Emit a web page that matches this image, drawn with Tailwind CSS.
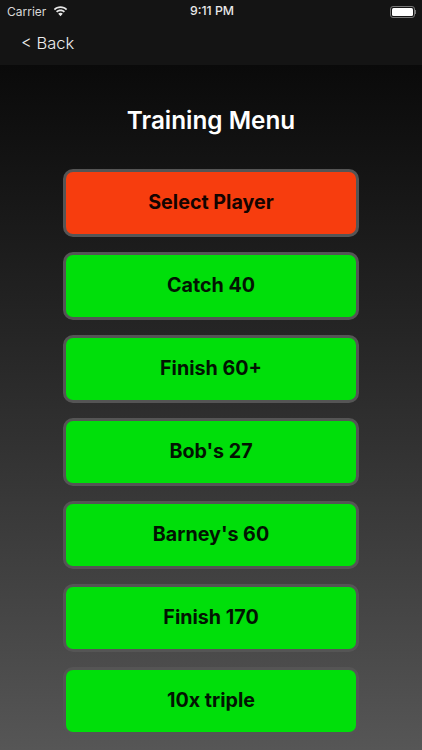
<!DOCTYPE html>
<html lang="en">

<head>
    <meta charset="UTF-8">
    <meta name="viewport" content="width=device-width, initial-scale=1.0">
    <title>Training Menu</title>
    <script src="https://cdn.jsdelivr.net/npm/@tailwindcss/browser@4"></script>
</head>

<body class="bg-black font-['Inter','Liberation_Sans',sans-serif] overflow-hidden">
    <div class="w-[422px] h-[750px] flex flex-col overflow-hidden">
        <!-- status bar + nav bar -->
        <div class="h-[65px] bg-[#141414] shrink-0">
            <div class="h-[22px] pl-[7px] pr-[6px] pt-[1px] flex items-center justify-between relative text-white">
                <div class="flex items-center gap-[7px] text-[12px] text-[#d8d8d8]">
                    <span>Carrier</span>
                    <svg class="w-[15px] h-[11px]" viewBox="0 0 16 12" fill="#e8e8e8">
                        <path d="M8 2.2c2.3 0 4.4.9 6 2.400l1.300-1.400C13.400 1.300 10.800.2 8 .2S2.600 1.300.7 3.200L2 4.600c1.600-1.500 3.700-2.400 6-2.400z" />
                        <path d="M8 5.700c1.400 0 2.600.5 3.600 1.400l1.300-1.400C11.600 4.500 9.900 3.800 8 3.800s-3.600.7-4.900 1.900l1.300 1.400c1-.9 2.200-1.400 3.600-1.400z" />
                        <path d="M8 7.400c-1 0-1.800.4-2.500 1L8 11.300l2.500-2.900c-.7-.6-1.500-1-2.500-1z" />
                    </svg>
                </div>
                <span class="absolute left-[190px] top-[3px] text-[12.300px] leading-[16px] font-medium text-[#e8e8e8]">9:11 PM</span>
                <div class="flex items-center">
                    <div class="w-[25px] h-[12px] rounded-[3px] border border-[#777] p-[1px]">
                        <div class="w-full h-full rounded-[1.500px] bg-white"></div>
                    </div>
                    <div class="w-[1px] h-[4px] bg-[#777]"></div>
                </div>
            </div>
            <div class="pl-[21px] pt-[9px] text-[16.500px] leading-[24px] font-light text-[#eeeeee]">&lt; Back</div>
        </div>

        <!-- menu -->
        <div class="flex-1 bg-gradient-to-b from-[#0a0a0a] to-[#565656] flex flex-col items-center pt-[39px]">
            <h1 class="text-[24.300px] leading-[32px] font-semibold text-white mb-[33px]">Training Menu</h1>
            <div class="flex flex-col gap-[15px]">
                <button class="w-[296px] h-[68px] rounded-[10px] border-[3px] border-[#555555] bg-[#f73d0e] text-[19.700px] font-bold text-[#140400]">Select Player</button>
                <button class="w-[296px] h-[68px] rounded-[10px] border-[3px] border-[#555555] bg-[#00df0a] text-[19.700px] font-bold text-[#021402]">Catch 40</button>
                <button class="w-[296px] h-[68px] rounded-[10px] border-[3px] border-[#555555] bg-[#00df0a] text-[19.700px] font-bold text-[#021402]">Finish 60+</button>
                <button class="w-[296px] h-[68px] rounded-[10px] border-[3px] border-[#555555] bg-[#00df0a] text-[19.700px] font-bold text-[#021402]">Bob's 27</button>
                <button class="w-[296px] h-[68px] rounded-[10px] border-[3px] border-[#555555] bg-[#00df0a] text-[19.700px] font-bold text-[#021402]">Barney's 60</button>
                <button class="w-[296px] h-[68px] rounded-[10px] border-[3px] border-[#555555] bg-[#00df0a] text-[19.700px] font-bold text-[#021402]">Finish 170</button>
                <button class="w-[296px] h-[68px] rounded-[10px] border-[3px] border-[#555555] bg-[#00df0a] text-[19.700px] font-bold text-[#021402]">10x triple</button>
            </div>
        </div>
    </div>
</body>

</html>
